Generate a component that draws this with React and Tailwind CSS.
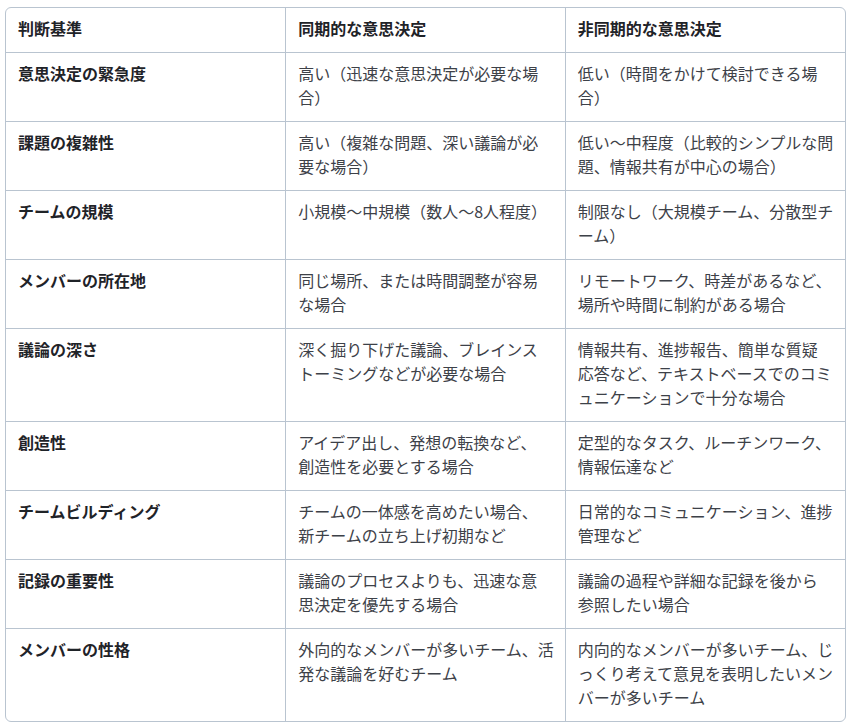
const headers = ['判断基準', '同期的な意思決定', '非同期的な意思決定']

const rows = [
  {
    label: '意思決定の緊急度',
    sync: ['高い（迅速な意思決定が必要な場', '合）'],
    async: ['低い（時間をかけて検討できる場', '合）'],
  },
  {
    label: '課題の複雑性',
    sync: ['高い（複雑な問題、深い議論が必', '要な場合）'],
    async: ['低い〜中程度（比較的シンプルな問', '題、情報共有が中心の場合）'],
  },
  {
    label: 'チームの規模',
    sync: ['小規模〜中規模（数人〜8人程度）'],
    async: ['制限なし（大規模チーム、分散型チ', 'ーム）'],
  },
  {
    label: 'メンバーの所在地',
    sync: ['同じ場所、または時間調整が容易', 'な場合'],
    async: ['リモートワーク、時差があるなど、', '場所や時間に制約がある場合'],
  },
  {
    label: '議論の深さ',
    sync: ['深く掘り下げた議論、ブレインス', 'トーミングなどが必要な場合'],
    async: ['情報共有、進捗報告、簡単な質疑', '応答など、テキストベースでのコミ', 'ュニケーションで十分な場合'],
  },
  {
    label: '創造性',
    sync: ['アイデア出し、発想の転換など、', '創造性を必要とする場合'],
    async: ['定型的なタスク、ルーチンワーク、', '情報伝達など'],
  },
  {
    label: 'チームビルディング',
    sync: ['チームの一体感を高めたい場合、', '新チームの立ち上げ初期など'],
    async: ['日常的なコミュニケーション、進捗', '管理など'],
  },
  {
    label: '記録の重要性',
    sync: ['議論のプロセスよりも、迅速な意', '思決定を優先する場合'],
    async: ['議論の過程や詳細な記録を後から', '参照したい場合'],
  },
  {
    label: 'メンバーの性格',
    sync: ['外向的なメンバーが多いチーム、活', '発な議論を好むチーム'],
    async: ['内向的なメンバーが多いチーム、じ', 'っくり考えて意見を表明したいメン', 'バーが多いチーム'],
  },
]

function Lines({ lines }) {
  return lines.map((line) => (
    <span key={line} className="block whitespace-nowrap">
      {line}
    </span>
  ))
}

export default function App() {
  return (
    <div
      className="min-h-screen bg-white px-[5px] pt-[7px]"
      style={{ fontFamily: '"Noto Sans CJK JP", "Noto Sans", sans-serif' }}
    >
      <div className="overflow-hidden rounded-md border border-[#b9c4d0]">
        <table className="w-full table-fixed border-collapse text-[16px] leading-6">
          <thead>
            <tr>
              {headers.map((h, i) => (
                <th
                  key={h}
                  className={`px-3 pt-2 pb-3 text-left align-top font-bold text-[#1f2328] ${i > 0 ? 'border-l border-[#b9c4d0]' : ''}`}
                >
                  {h}
                </th>
              ))}
            </tr>
          </thead>
          <tbody>
            {rows.map((row) => (
              <tr key={row.label} className="border-t border-[#b9c4d0]">
                <td className="px-3 pt-2 pb-3 align-top font-bold text-[#1f2328]">{row.label}</td>
                <td className="border-l border-[#b9c4d0] px-3 pt-2 pb-3 align-top text-[#3d4148]">
                  <Lines lines={row.sync} />
                </td>
                <td className="border-l border-[#b9c4d0] px-3 pt-2 pb-3 align-top text-[#3d4148]">
                  <Lines lines={row.async} />
                </td>
              </tr>
            ))}
          </tbody>
        </table>
      </div>
    </div>
  )
}
